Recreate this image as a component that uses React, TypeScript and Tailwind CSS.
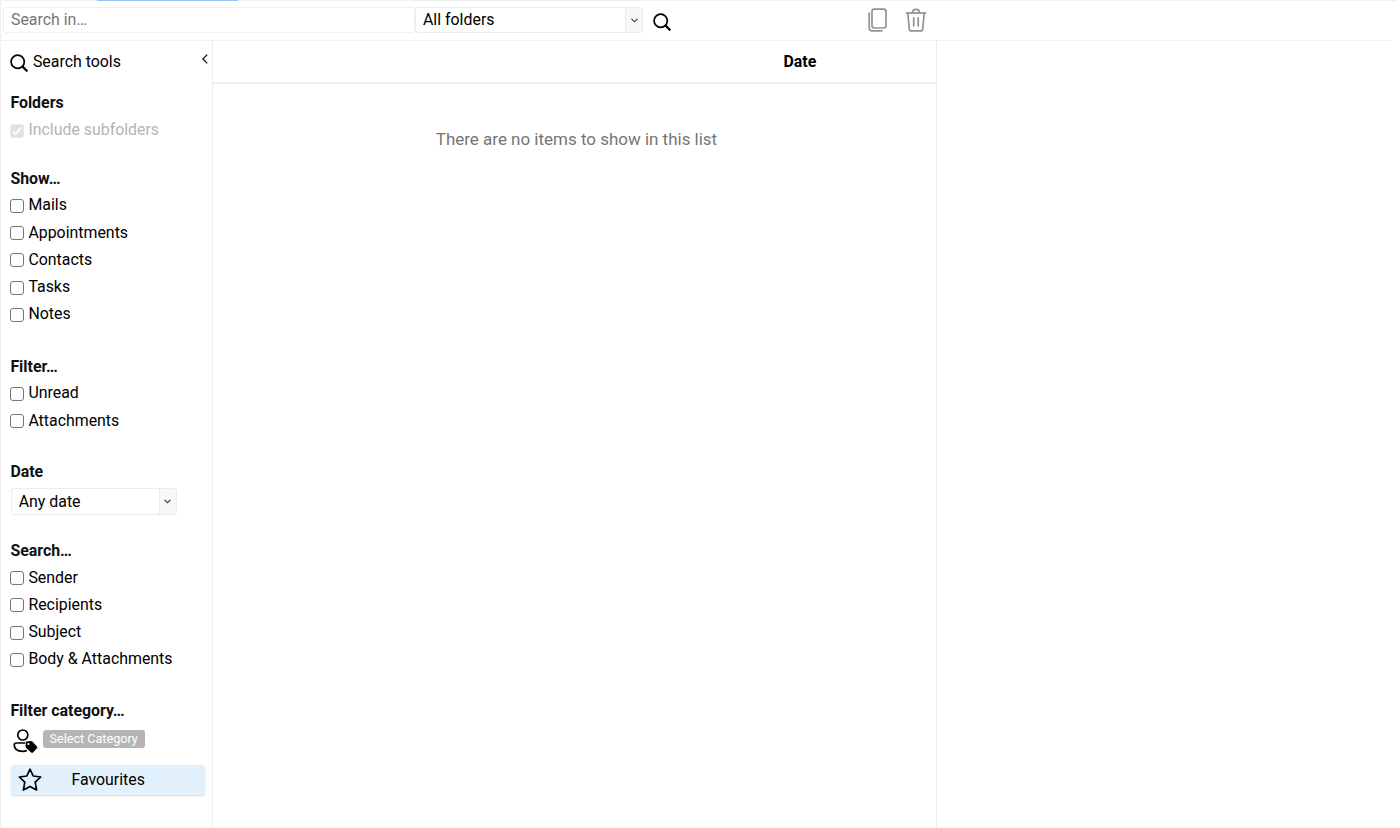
import { ReactNode } from "react";
import clsx from "clsx";

const SearchIcon = () => (
  <svg className="w-[18px] h-[18px] shrink-0" viewBox="0 0 18 18" fill="none" stroke="currentColor">
    <circle cx="7.7" cy="7.7" r="6.6" strokeWidth="1.7" />
    <path d="M12.4 12.4L17.4 17.4" strokeWidth="2.2" />
  </svg>
);

const ChevronDown = () => (
  <svg className="w-[7px] h-[5px]" viewBox="0 0 7 5" fill="none" stroke="#333" strokeWidth="1.1">
    <path d="M0.5 0.8L3.5 3.8L6.5 0.8" />
  </svg>
);

const Select = ({ value, className }: { value: string; className: string }) => (
  <div
    className={clsx(
      "flex border border-[#ebebeb] rounded-[3px] overflow-hidden",
      className
    )}
  >
    <div className="flex-1 pl-[7px]">{value}</div>
    <div className="w-[17px] flex items-center justify-center bg-[#f7f7f7] border-l border-[#ebebeb]">
      <ChevronDown />
    </div>
  </div>
);

const Checkbox = ({ label, disabled }: { label: string; disabled?: boolean }) => (
  <label className={clsx("flex items-center h-[27.2px]", disabled && "text-[#b4b4b4]")}>
    {disabled ? (
      <svg className="relative top-[0.7px] w-[14px] h-[14px] mr-[4px]" viewBox="0 0 14 14" fill="none">
        <rect x="0.3" y="0.3" width="13.4" height="13.4" rx="2.2" fill="#e1e1e1" />
        <path d="M3 7.4L5.7 10.2L11.2 3.6" stroke="#fff" strokeWidth="1.8" />
      </svg>
    ) : (
      <input
        type="checkbox"
        className="relative top-[0.7px] appearance-none w-[14px] h-[14px] mr-[4px] border border-[#767676] rounded-[3px] bg-white"
      />
    )}
    {label}
  </label>
);

const Section = ({
  title,
  className,
  children,
}: {
  title: string;
  className?: string;
  children: ReactNode;
}) => (
  <div className={className}>
    <h3 className="h-[26px] leading-[26.6px] font-bold text-[#111]">{title}</h3>
    {children}
  </div>
);

const Toolbar = () => (
  <div className="w-[1389px] h-[40px] flex items-start pt-[6px] pl-[2px] border-b border-[#f0f0f0]">
    <input
      placeholder="Search in…"
      className="w-[412px] h-[26px] pl-[7px] pb-px border border-[#f0f0f0] rounded-[3px] placeholder:text-[#757575]"
    />
    <Select value="All folders" className="w-[228px] h-[26px] leading-[24px]" />
    <button className="mt-[6px] ml-[10px] w-[18px]">
      <SearchIcon />
    </button>
    <button className="ml-[197px] mt-px">
      <svg className="w-[20px] h-[24px]" viewBox="0 0 20 24" fill="none" stroke="#929292" strokeWidth="1.7">
        <rect x="4" y="1.2" width="14" height="18.8" rx="2.4" />
        <path d="M1.2 4.6V19.4Q1.2 22.9 4.4 22.9H14.6" />
      </svg>
    </button>
    <button className="ml-[17px] mt-px">
      <svg className="w-[22px] h-[24px]" viewBox="0 0 22 24" fill="none" stroke="#929292" strokeWidth="1.7">
        <path d="M0.7 5H21.3" />
        <path d="M7.5 4.8C7.5 2.5 8.7 1.3 11 1.3S14.5 2.5 14.5 4.8" />
        <path d="M2.8 5.2L4.3 20.8Q4.5 22.9 6.3 22.9H15.7Q17.5 22.9 17.7 20.8L19.2 5.2" />
        <path d="M8.7 9.2V18.6M13.2 9.2V18.6" />
      </svg>
    </button>
  </div>
);

const Sidebar = () => (
  <div className="w-[212px] shrink-0 pl-[9.4px] border-r border-[#ededed]">
    <div className="flex items-center h-[41px]">
      <div className="relative top-px">
        <SearchIcon />
      </div>
      <span className="ml-[4.5px]">Search tools</span>
      <svg className="w-[6px] h-[10px] ml-auto mr-[4px] mb-[5px]" viewBox="0 0 6 10" fill="none" stroke="#111" strokeWidth="1.3">
        <path d="M5.2 0.6L0.9 5L5.2 9.4" />
      </svg>
    </div>
    <Section title="Folders" className="mt-[8.4px]">
      <Checkbox label="Include subfolders" disabled />
    </Section>
    <Section title="Show…" className="mt-[22.2px]">
      <Checkbox label="Mails" />
      <Checkbox label="Appointments" />
      <Checkbox label="Contacts" />
      <Checkbox label="Tasks" />
      <Checkbox label="Notes" />
    </Section>
    <Section title="Filter…" className="mt-[26px]">
      <Checkbox label="Unread" />
      <Checkbox label="Attachments" />
    </Section>
    <Section title="Date" className="mt-[25.4px]">
      <Select value="Any date" className="w-[166px] h-[27px] leading-[26px] ml-[0.3px] mt-[2.6px]" />
    </Section>
    <Section title="Search…" className="mt-[22.8px]">
      <Checkbox label="Sender" />
      <Checkbox label="Recipients" />
      <Checkbox label="Subject" />
      <Checkbox label="Body & Attachments" />
    </Section>
    <Section title="Filter category…" className="mt-[25.6px]">
      <div className="flex items-start pt-[5px] pl-[2.6px]">
        <svg className="w-[25px] h-[25px]" viewBox="0 0 25 25" fill="none" stroke="#000" strokeWidth="1.7">
          <circle cx="9.8" cy="6" r="5" />
          <path d="M12 14H3.2Q1.3 14 1.3 16C1.3 20 4.5 22.3 9.5 22.3Q12 22.3 14 21.5" />
          <path
            d="M13.6 12.4L18 12Q18.8 12 19.4 12.6L24 17.4Q24.8 18.3 24 19.2L20 23.6Q19.1 24.4 18.2 23.6L13.2 18.9Q12.6 18.3 12.6 17.5V13.5Q12.6 12.4 13.6 12.4Z"
            fill="#000"
            stroke="none"
          />
          <circle cx="15.4" cy="15" r="1.1" fill="#fff" stroke="none" />
        </svg>
        <span className="ml-[4.7px] mt-px w-[102px] h-[18px] leading-[18px] text-center text-[12.6px] text-white bg-[#b5b5b5] rounded-[3px]">
          Select Category
        </span>
      </div>
      <div className="flex items-center ml-[0.4px] mt-[11px] w-[194.6px] h-[30px] pl-[7px] bg-[#e3f1fd] rounded-[3px] shadow-[0_1px_2px_rgba(0,0,0,0.16)]">
        <svg className="w-[24px] h-[24px]" viewBox="0 0 24 24" fill="none" stroke="#000" strokeWidth="1.7" strokeLinejoin="round">
          <path d="M12 1.2L15.2 8L22.7 9L17.2 14.2L18.6 22L12 18.4L5.4 22L6.8 14.2L1.3 9L8.8 8Z" />
        </svg>
        <span className="ml-[29.6px]">Favourites</span>
      </div>
    </Section>
  </div>
);

const App = () => {
  return (
    <div className="w-[1400px] h-[828px] overflow-hidden bg-white text-black text-[15.9px] font-['Roboto',sans-serif]">
      <div className="w-[1396px] h-px bg-[#f0f0f0]">
        <div className="w-[141px] h-px ml-[97px] bg-[#96c3f0]" />
      </div>
      <div className="h-[827px] flex flex-col border-l border-[#f0f0f0]">
        <Toolbar />
        <div className="flex flex-1">
          <Sidebar />
          <div className="w-[724px] border-r border-[#ededed]">
            <div className="h-[43px] leading-[41px] pl-[570.5px] font-bold border-b-2 border-[#f0f0f0]">
              Date
            </div>
            <p className="mt-[43px] pl-[4px] text-center text-[16.98px] text-[#757575]">
              There are no items to show in this list
            </p>
          </div>
        </div>
      </div>
    </div>
  );
};

export default App;
